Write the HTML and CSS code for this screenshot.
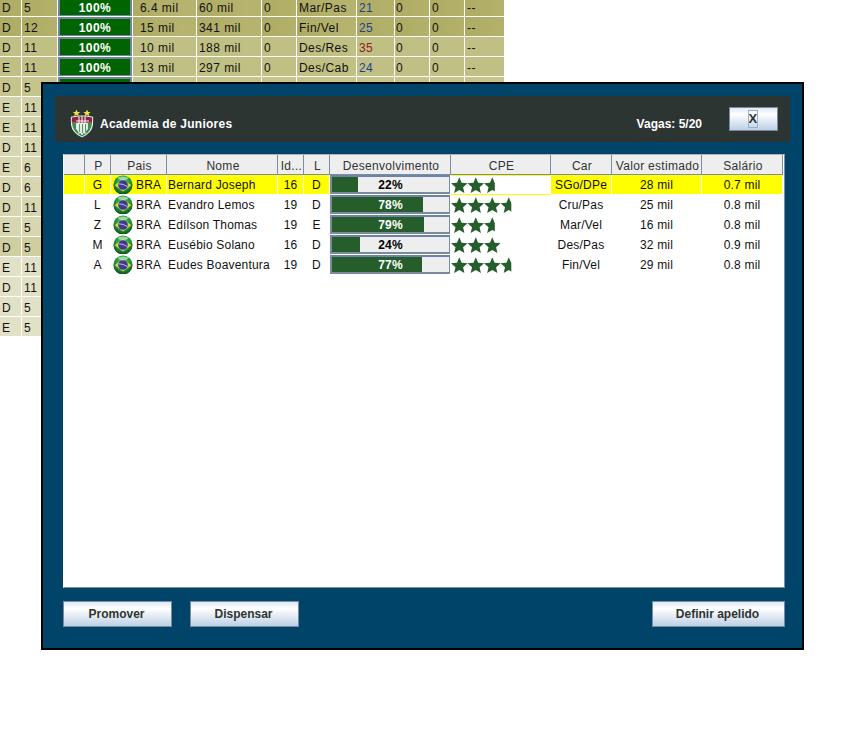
FILE: index.html
```html
<!DOCTYPE html>
<html lang="pt">
<head>
<meta charset="utf-8">
<title>Academia de Juniores</title>
<link rel="stylesheet" href="styles.css">
</head>
<body>
<svg class="defs" width="0" height="0" aria-hidden="true">
  <defs>
    <path id="star" d="M8.3 .3 L10.65 5.76 L16.6 6.3 L12.1 10.24 L13.4 16 L8.3 13 L3.2 16 L4.5 10.24 L0 6.3 L5.95 5.76 Z"/>
    <clipPath id="half"><rect x="0" y="0" width="10.8" height="17"/></clipPath>
    <radialGradient id="g-globe" cx="50%" cy="38%" r="62%">
      <stop offset="0" stop-color="#6fd07a"/>
      <stop offset=".6" stop-color="#1f9a3c"/>
      <stop offset="1" stop-color="#0c4a1c"/>
    </radialGradient>
    <symbol id="flag" viewBox="0 0 20 20">
      <circle cx="10" cy="10" r="9.6" fill="url(#g-globe)"/>
      <path d="M1.6 10.2 L10 3.8 L18.4 10.2 L10 16.4 Z" fill="#d9d23a"/>
      <circle cx="10" cy="10" r="4.8" fill="#3c3a92"/>
      <path d="M5.6 8.8 Q10 8.6 14.4 11.6" stroke="#c8c8e8" stroke-width=".9" fill="none"/>
      <ellipse cx="10" cy="3.2" rx="5" ry="1.8" fill="#b9e6b4" opacity=".75"/>
    </symbol>
  </defs>
</svg>

<table class="bg-table">
  <tbody>
    <tr class="t1"><td class="c1">D</td><td class="c2">5</td><td class="c3"><div class="full">100%</div></td><td class="c4">6.4 mil</td><td class="c5">60 mil</td><td class="c6">0</td><td class="c7">Mar/Pas</td><td class="c8 blue">21</td><td class="c9">0</td><td class="c10">0</td><td class="c11">--</td></tr>
    <tr class="t1"><td class="c1">D</td><td class="c2">12</td><td class="c3"><div class="full">100%</div></td><td class="c4">15 mil</td><td class="c5">341 mil</td><td class="c6">0</td><td class="c7">Fin/Vel</td><td class="c8 blue">25</td><td class="c9">0</td><td class="c10">0</td><td class="c11">--</td></tr>
    <tr class="t2"><td class="c1">D</td><td class="c2">11</td><td class="c3"><div class="full">100%</div></td><td class="c4">10 mil</td><td class="c5">188 mil</td><td class="c6">0</td><td class="c7">Des/Res</td><td class="c8 red">35</td><td class="c9">0</td><td class="c10">0</td><td class="c11">--</td></tr>
    <tr class="t2"><td class="c1">E</td><td class="c2">11</td><td class="c3"><div class="full">100%</div></td><td class="c4">13 mil</td><td class="c5">297 mil</td><td class="c6">0</td><td class="c7">Des/Cab</td><td class="c8 blue">24</td><td class="c9">0</td><td class="c10">0</td><td class="c11">--</td></tr>
    <tr class="t3"><td class="c1">D</td><td class="c2">5</td><td class="c3"><div class="full"></div></td><td class="c4"></td><td class="c5"></td><td class="c6"></td><td class="c7"></td><td class="c8"></td><td class="c9"></td><td class="c10"></td><td class="c11"></td></tr>
    <tr class="t4"><td class="c1">E</td><td class="c2">11</td></tr>
    <tr class="t4"><td class="c1">E</td><td class="c2">11</td></tr>
    <tr class="t5"><td class="c1">D</td><td class="c2">11</td></tr>
    <tr class="t5"><td class="c1">E</td><td class="c2">6</td></tr>
    <tr class="t5"><td class="c1">D</td><td class="c2">6</td></tr>
    <tr class="t5"><td class="c1">D</td><td class="c2">11</td></tr>
    <tr class="t5"><td class="c1">E</td><td class="c2">5</td></tr>
    <tr class="t6"><td class="c1">D</td><td class="c2">5</td></tr>
    <tr class="t7"><td class="c1">E</td><td class="c2">11</td></tr>
    <tr class="t7"><td class="c1">D</td><td class="c2">11</td></tr>
    <tr class="t7"><td class="c1">D</td><td class="c2">5</td></tr>
    <tr class="t7"><td class="c1">E</td><td class="c2">5</td></tr>
  </tbody>
</table>

<section class="modal">
  <header class="modal-head">
    <svg class="crest" width="24" height="30" viewBox="0 0 24 30" aria-hidden="true">
      <path d="M6.5 0.5 L7.6 3 L10.2 3.1 L8.1 4.7 L8.9 7.2 L6.5 5.8 L4.1 7.2 L4.9 4.7 L2.8 3.1 L5.4 3 Z" fill="#f2e33a"/>
      <path d="M17 0.5 L18.1 3 L20.7 3.1 L18.6 4.7 L19.4 7.2 L17 5.8 L14.6 7.2 L15.4 4.7 L13.3 3.1 L15.9 3 Z" fill="#f2e33a"/>
      <path d="M0.8 7.8 Q12 5 23.2 7.8 L23 16 Q22 24 12 28.5 Q2 24 1 16 Z" fill="#e6ece6"/>
      <path d="M1.8 8.6 Q12 6.2 22.2 8.6 L22 13.8 L1.9 13.8 Z" fill="#8a2440"/>
      <path d="M2 14 L22 14 Q21.6 23 12 27.4 Q2.4 23 2 14 Z" fill="#3f8a55"/>
      <path d="M6 14 L18 14 L18 20 Q15 24 12 25.6 Q9 24 6 20 Z" fill="#dfe8df"/>
      <path d="M9 8 V25 M12 7.5 V26 M15 8 V25 M6 12 H19 M6 16 H17" stroke="#f4f6f2" stroke-width="1.1" fill="none"/>
      <path d="M9.5 15 V23 M12.5 15 V24 M15.5 15 V23" stroke="#4d8a60" stroke-width=".9" fill="none"/>
    </svg>
    <h1 class="modal-title">Academia de Juniores</h1>
    <span class="vagas">Vagas: 5/20</span>
    <button class="btn btn-close" type="button"><span class="close-focus">X</span></button>
  </header>

  <div class="table-panel">
    <table class="juniors">
      <thead>
        <tr>
          <th class="k1"></th><th class="k2">P</th><th class="k3">Pais</th><th class="k4">Nome</th><th class="k5">Id...</th><th class="k6">L</th><th class="k7">Desenvolvimento</th><th class="k8">CPE</th><th class="k9">Car</th><th class="k10">Valor estimado</th><th class="k11">Salário</th>
        </tr>
      </thead>
      <tbody>
        <tr class="selected">
          <td></td><td>G</td>
          <td class="pais"><span class="pais-in"><svg class="flag" width="20" height="20"><use href="#flag"/></svg>BRA</span></td>
          <td class="nome">Bernard Joseph</td><td>16</td><td>D</td>
          <td class="dev"><div class="bar"><div class="fill" style="width:22%"></div><span class="bar-label">22%</span></div></td>
          <td class="cpe"><svg class="stars" width="85" height="17" viewBox="0 0 85 17"><use href="#star"/><use href="#star" x="16.5"/><use href="#star" x="33" clip-path="url(#half)"/></svg></td>
          <td>SGo/DPe</td><td>28 mil</td><td>0.7 mil</td>
        </tr>
        <tr>
          <td></td><td>L</td>
          <td class="pais"><span class="pais-in"><svg class="flag" width="20" height="20"><use href="#flag"/></svg>BRA</span></td>
          <td class="nome">Evandro Lemos</td><td>19</td><td>D</td>
          <td class="dev"><div class="bar"><div class="fill" style="width:78%"></div><span class="bar-label on">78%</span></div></td>
          <td class="cpe"><svg class="stars" width="85" height="17" viewBox="0 0 85 17"><use href="#star"/><use href="#star" x="16.5"/><use href="#star" x="33"/><use href="#star" x="49.5" clip-path="url(#half)"/></svg></td>
          <td>Cru/Pas</td><td>25 mil</td><td>0.8 mil</td>
        </tr>
        <tr>
          <td></td><td>Z</td>
          <td class="pais"><span class="pais-in"><svg class="flag" width="20" height="20"><use href="#flag"/></svg>BRA</span></td>
          <td class="nome">Edílson Thomas</td><td>19</td><td>E</td>
          <td class="dev"><div class="bar"><div class="fill" style="width:79%"></div><span class="bar-label on">79%</span></div></td>
          <td class="cpe"><svg class="stars" width="85" height="17" viewBox="0 0 85 17"><use href="#star"/><use href="#star" x="16.5"/><use href="#star" x="33" clip-path="url(#half)"/></svg></td>
          <td>Mar/Vel</td><td>16 mil</td><td>0.8 mil</td>
        </tr>
        <tr>
          <td></td><td>M</td>
          <td class="pais"><span class="pais-in"><svg class="flag" width="20" height="20"><use href="#flag"/></svg>BRA</span></td>
          <td class="nome">Eusébio Solano</td><td>16</td><td>D</td>
          <td class="dev"><div class="bar"><div class="fill" style="width:24%"></div><span class="bar-label">24%</span></div></td>
          <td class="cpe"><svg class="stars" width="85" height="17" viewBox="0 0 85 17"><use href="#star"/><use href="#star" x="16.5"/><use href="#star" x="33"/></svg></td>
          <td>Des/Pas</td><td>32 mil</td><td>0.9 mil</td>
        </tr>
        <tr>
          <td></td><td>A</td>
          <td class="pais"><span class="pais-in"><svg class="flag" width="20" height="20"><use href="#flag"/></svg>BRA</span></td>
          <td class="nome">Eudes Boaventura</td><td>19</td><td>D</td>
          <td class="dev"><div class="bar"><div class="fill" style="width:77%"></div><span class="bar-label on">77%</span></div></td>
          <td class="cpe"><svg class="stars" width="85" height="17" viewBox="0 0 85 17"><use href="#star"/><use href="#star" x="16.5"/><use href="#star" x="33"/><use href="#star" x="49.5" clip-path="url(#half)"/></svg></td>
          <td>Fin/Vel</td><td>29 mil</td><td>0.8 mil</td>
        </tr>
      </tbody>
    </table>
  </div>

  <footer class="modal-foot">
    <button class="btn btn-wide" type="button">Promover</button>
    <button class="btn btn-wide" type="button">Dispensar</button>
    <button class="btn btn-apelido" type="button">Definir apelido</button>
  </footer>
</section>
</body>
</html>
```
FILE: styles.css
```css
html, body {
  margin: 0;
  padding: 0;
  background: #fff;
}

body {
  position: relative;
  width: 842px;
  height: 737px;
  overflow: hidden;
  font-family: "Liberation Sans", Arial, sans-serif;
  font-size: 12px;
  color: #111;
}

.defs {
  position: absolute;
}

/* background table */
.bg-table {
  margin-top: -3px;
  border-collapse: separate;
  border-spacing: 0;
  table-layout: fixed;
  width: 504px;
  letter-spacing: 0.45px;
}

.bg-table td {
  height: 16px;
  padding: 3px 0 0 2px;
  border-right: 1px solid #fff;
  border-bottom: 1px solid #fff;
  box-sizing: content-box;
  white-space: nowrap;
  line-height: 16px;
  overflow: hidden;
}

.bg-table .c1 { width: 19px; }
.bg-table .c2 { width: 33px; }
.bg-table .c3 { width: 74px; padding: 0; height: 19px; }
.bg-table .c4 { width: 56px; padding-left: 7px; }
.bg-table .c5 { width: 62px; padding-left: 2px; }
.bg-table .c6 { width: 32px; }
.bg-table .c7 { width: 57px; }
.bg-table .c8 { width: 35px; }
.bg-table .c9 { width: 33px; padding-left: 1px; }
.bg-table .c10 { width: 32px; }
.bg-table .c11 { width: 37px; border-right: 0; }

.t1 td { background: linear-gradient(90deg, #aeab63, #b6b36f 50px); }
.t2 td { background: #c1c084; }
.t3 td { background: #c5c48a; }
.t4 td { background: #d3d2a6; }
.t5 td { background: #d7d6ae; }
.t6 td { background: #cfce9f; }
.t7 td { background: #e1e1c6; }

.blue { color: #1f3f92; }
.red { color: #8c1d1d; }

.full {
  height: 19px;
  box-sizing: border-box;
  border: 2px solid #71839f;
  border-bottom-width: 1px;
  background: #006400;
  color: #fff;
  font-weight: bold;
  text-align: center;
  line-height: 18px;
  overflow: hidden;
}

/* modal */
.modal {
  position: absolute;
  left: 41px;
  top: 82px;
  box-sizing: border-box;
  width: 763px;
  height: 568px;
  border: 2px solid #000;
  background: #00446a;
  display: flex;
  flex-direction: column;
  padding: 12px 12px 0 12px;
}

.modal-head {
  height: 46px;
  flex: none;
  background: #2d3533;
  display: flex;
  align-items: center;
  padding: 0 12px 0 15px;
  color: #fff;
}

.crest {
  flex: none;
  margin-top: 10px;
  margin-right: 6px;
}

.modal-title {
  margin: 10px 0 0;
  font-size: 12px;
  font-weight: bold;
  letter-spacing: 0.25px;
  flex: 1;
}

.vagas {
  margin-top: 10px;
  font-weight: bold;
  font-size: 12px;
  margin-right: 27px;
}

.btn {
  display: block;
  box-sizing: border-box;
  padding: 0 2px 0 0;
  border: 1px solid #7a8aa0;
  background: linear-gradient(180deg, #dfe8f3 0, #fff 28%, #e6edf5 55%, #bdd0e6 100%);
  font-family: "Liberation Sans", Arial, sans-serif;
  font-size: 12px;
  font-weight: bold;
  color: #2d3533;
  text-align: center;
}

.btn-close {
  width: 49px;
  height: 24px;
  flex: none;
  display: flex;
  align-items: center;
  justify-content: center;
}

.close-focus {
  display: block;
  width: 10px;
  height: 18px;
  line-height: 16px;
  box-sizing: border-box;
  border: 1px solid #9db0c8;
  font-size: 13px;
  font-weight: bold;
  overflow: hidden;
}

.table-panel {
  margin: 12px 5px 0 8px;
  height: 434px;
  flex: none;
  box-sizing: border-box;
  background: #fff;
  border: 1px solid #7d8f9f;
  border-top-color: #a8b4c0;
  border-left-color: #fff;
  overflow: hidden;
}

.juniors {
  border-collapse: separate;
  border-spacing: 0;
  table-layout: fixed;
  width: 719px;
  letter-spacing: 0.2px;
  text-align: center;
}

.juniors th {
  height: 20px;
  box-sizing: border-box;
  padding: 2px 0 0 2px;
  background: #eee;
  color: #333;
  font-weight: normal;
  letter-spacing: 0.3px;
  border-right: 1px solid #7d8ea3;
  border-bottom: 1px solid #7d8ea3;
  white-space: nowrap;
  overflow: hidden;
}

.k1 { width: 21px; }
.k2 { width: 26px; }
.k3 { width: 56px; }
.k4 { width: 111px; }
.k5 { width: 26px; }
.k6 { width: 26px; }
.k7 { width: 121px; }
.k8 { width: 100px; }
.k9 { width: 61px; }
.k10 { width: 90px; }
.k11 { width: 81px; }

.juniors td {
  height: 20px;
  box-sizing: border-box;
  padding: 2px 0 0;
  border-right: 1px solid #fff;
  border-bottom: 1px solid #fff;
  white-space: nowrap;
  overflow: hidden;
  line-height: 17px;
  color: #111;
}

.selected td {
  background: #ff0;
}

.juniors .nome {
  text-align: left;
  padding-left: 1px;
}

.juniors .pais {
  text-align: left;
  padding-top: 0;
}

.pais-in {
  display: flex;
  align-items: flex-start;
  height: 19px;
  padding-left: 2px;
  line-height: 21px;
}

.flag {
  flex: none;
  margin-right: 3px;
}

.juniors .dev {
  background: #fff;
  padding-top: 0;
}

.bar {
  position: relative;
  box-sizing: border-box;
  height: 19px;
  background: #eee;
  border: 2px solid #7b8a9c;
  border-top-color: #6c83a8;
  margin-right: -1px;
}

.fill {
  height: 100%;
  background: #255d2b;
}

.bar-label {
  position: absolute;
  inset: 0;
  text-align: center;
  font-weight: bold;
  line-height: 17px;
  color: #000;
}

.bar-label.on {
  color: #fff;
}

.juniors .cpe {
  text-align: left;
  padding-top: 0;
}

.selected .cpe {
  background: #fff;
  box-shadow: inset 0 1px 0 #ff0;
  border-bottom: 1px solid #ff0;
}

.stars {
  display: block;
  fill: #255d2b;
  margin-top: 1px;
}

.modal-foot {
  display: flex;
  padding: 13px 5px 0 8px;
  gap: 18px;
}

.btn-wide {
  width: 109px;
  height: 26px;
}

.btn-apelido {
  width: 133px;
  height: 26px;
  margin-left: auto;
}
```
